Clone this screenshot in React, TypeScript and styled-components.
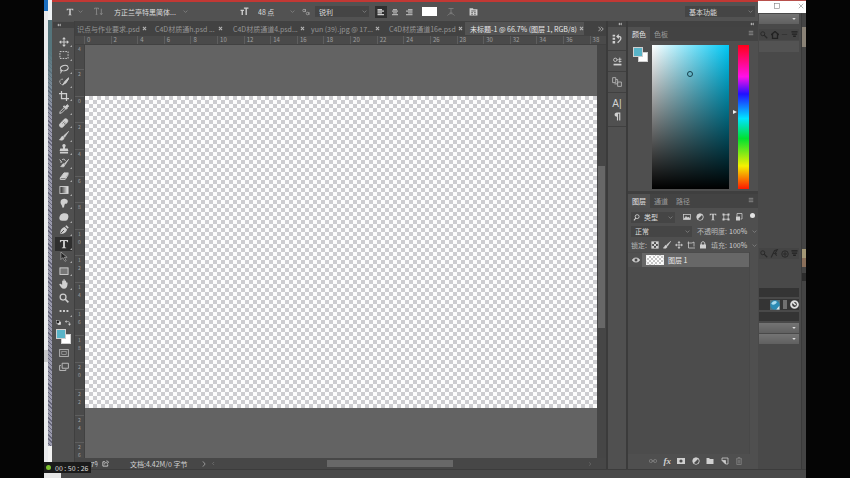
import React from "react";
import styled, { createGlobalStyle, css } from "styled-components";

const GlobalStyle = createGlobalStyle`
  * { box-sizing: border-box; }
  body { margin: 0; background: #050505; }
  body, button, input, select {
    font-family: "Noto Sans CJK SC", "Noto Sans", sans-serif;
    font-size: 7px;
    line-height: 10px;
    color: #d2d2d2;
  }
  button, input, select { margin: 0; padding: 0; border: 0; background: none; outline: none; }
`;

const checker = (size: number, tone: string) => css`
  background: repeating-conic-gradient(${tone} 0 25%, #fdfdfd 0 50%) 0 0 / ${size}px ${size}px;
`;

/* ---------- icons ---------- */
const shapes: Record<string, React.ReactNode> = {
  move: <><path d="M8 2v12M2 8h12" /><path d="M8 0l3 3.5H5zM8 16l3-3.5H5zM0 8l3.5-3v6zM16 8l-3.5-3v6z" fill="currentColor" stroke="none" /></>,
  marquee: <path d="M1.5 2.5h13v11h-13z" strokeDasharray="2.6 1.7" />,
  lasso: <><ellipse cx="8.5" cy="6.5" rx="6.3" ry="4.3" transform="rotate(-12 8.5 6.5)" /><path d="M3.5 9.5c-2 1-1 3 .5 2.5s1.500-2-.5-2.500M3.500 12l-1 3" /></>,
  quick: <><path d="M6 3.500C2 3 0 7 2 10s5 3 6 2" strokeDasharray="2 1.200" /><path d="M15.500 1L9 7.500l-2.500 4.500 4.500-2.500L16 2z" fill="currentColor" stroke="currentColor" /></>,
  crop: <path d="M4 0v12h12M0 4h12v12" strokeWidth="2" />,
  dropper: <><path d="M9 3l4 4-1.500 1.500-5-4.500zM10.500 4l2.500-3 2.500 2-2.500 3z" fill="currentColor" /><path d="M8 6l-6 6-.8 3 3-.8 6-6" /></>,
  heal: <><path d="M1.500 9.500l7-7.500c3-2 7 1 5 4.500l-7 7.500c-3 2.500-7.500-1-5-4.500z" fill="currentColor" /><path d="M6 6l4.500 4.500M5 9h1M8 11h1M8 6h1M10 8h1" stroke="#505050" strokeWidth="1" /></>,
  brush: <path d="M15.500.5L7 8l2 2zM6 8.500c-3 0-2 4-5.500 5.500 4 1.500 8 .5 7.500-3.500z" fill="currentColor" stroke="currentColor" strokeWidth="1" />,
  stamp: <path d="M5.500 1.500c1-2 4-2 5 0 .7 2-1 3-1 5.500H14l1 4H1l1-4h4.500c0-2.500-1.700-3.500-1-5.500zM1.500 12.500h13V15h-13z" fill="currentColor" stroke="none" />,
  history: <><path d="M15.500 2L8.500 9l1.500 1.500zM7.500 9c-3 0-2 3-5 4.500 4 1.500 7 .5 6.500-2.500z" fill="currentColor" stroke="currentColor" strokeWidth="1" /><path d="M1 2.500l3 3.500M2 6.500h3M5 2.500c3-1.500 5 0 5 2" /></>,
  eraser: <><path d="M8 3h7l-5 8H2z" fill="currentColor" /><path d="M2 11v2.500h8l5-8" /></>,
  gradient: <rect x="1.500" y="2.500" width="13" height="11" fill="url(#toolGradient)" />,
  smudge: <path d="M5 15c1-3-3-5-2.500-9C3 2 6 1 10 1.500c5 .5 5 6 2 7.500L9.500 9c-1 2-1.500 4-1.500 6z" fill="currentColor" stroke="none" />,
  sponge: <path d="M2 5c2-3 9-4 12-1.500 2 3 1 7-1 9.500-3 1.500-8 1.500-11 0-2-2-2-5 0-8z" fill="currentColor" stroke="none" />,
  pen: <><path d="M2 14c0-5 1-9 7-11l4 4c-2 6-6 7-11 7zM10 2l2-1.500 3.500 3.500L14 6" fill="currentColor" stroke="none" /><path d="M3 13l5-5" stroke="#505050" /></>,
  type: <path d="M1.500 1.500h13V5h-1.200c-.3-1.600-1-2-3.800-2v9.500c0 1 .6 1.200 2 1.400v.8h-7v-.8c1.400-.2 2-.4 2-1.400V3c-2.800 0-3.500.4-3.800 2H1.500z" fill="currentColor" stroke="none" />,
  path: <path d="M3 0v12l3-3 3.500 6 2-1-3-5.500H13z" fill="#242424" stroke="#bdbdbd" strokeWidth="1" />,
  rect: <rect x="1.500" y="3" width="13" height="10.500" fill="#777" />,
  hand: <path d="M5 9V3.500c0-1.500 1.800-1.500 2 0V1.500c0-1.800 2-1.800 2.200 0v2c.3-1.500 2-1.500 2.200.2V6c.4-1.500 2.300-1.200 2.300.2-.2 4-.7 9-5.500 9.300C4 15.500 3 12 .6 9 0 7.500 2 7 3 8z" fill="currentColor" stroke="none" />,
  zoom: <><circle cx="6.500" cy="6.500" r="4.700" strokeWidth="2" /><path d="M10 10l5 5" strokeWidth="2.600" /></>,
  more: <path d="M1 8h3M6.500 8h3M12 8h3" strokeWidth="3" />,
  mask: <><rect x="1" y="2.500" width="14" height="11" /><rect x="4.500" y="5.500" width="7" height="5" strokeWidth="1" /></>,
  screens: <><path d="M5 2h10v8H5z" /><path d="M3 5.500H1v8h10v-2" /></>,
  swap: <><path d="M3 4h5c3 0 4 1 4 7" /><path d="M4 0v8L0 4zM8 10h8l-4 5z" fill="currentColor" stroke="none" /></>,
  defaults: <><rect x="6" y="6" width="9" height="9" fill="#eee" /><rect x="1" y="1" width="9" height="9" fill="#111" /></>,
  orient: <path d="M1 4V2h7v2M4.500 2v11M3 13h3M13 3v10M11 11l2 3 2-3" />,
  sizes: <path d="M1 6h6M4 6v8M7 2h8M11 2v12" strokeWidth="2.400" />,
  aa: <><circle cx="4" cy="5" r="2.500" /><path d="M7 2v6" /><circle cx="11" cy="11" r="2.500" /><path d="M14 8v6" /></>,
  warp: <path d="M3 1h10M8 1v9M5 10h6M1 15c4-5 10-5 14 0" />,
  charpanel: <><path d="M1 2h6l1 2h7v11H1z" fill="currentColor" stroke="none" /><path d="M4 7h8M4 10h3M9 10h3M4 13h3M9 13h3" stroke="#555" /></>,
  left: <path d="M1 3h9M1 6.300h13M1 9.600h9M1 13h13" strokeWidth="2.500" />,
  center: <path d="M4 3h8M2 6.300h12M4 9.600h8M2 13h12" strokeWidth="2.500" />,
  right: <path d="M6 3h9M2 6.300h13M6 9.600h9M2 13h13" strokeWidth="2.500" />,
  menu: <path d="M2 3.500h12M2 8h12M2 12.500h12" strokeWidth="2" />,
  historyPanel: <><path d="M1 1h4v3H1zM1 6h4v3H1zM1 11h4v4H1z" fill="currentColor" stroke="none" /><path d="M8 4h4c3 0 3 4 0 7l-3 3M11 1L8 4l3 3" strokeWidth="2" /></>,
  props: <><path d="M1 13.500h14" strokeWidth="3" /><circle cx="4" cy="5" r="3" /><path d="M7 5h3M12 1v9M10 4h5M10 8h5" /></>,
  layersComp: <path d="M1 1h5v8H1zM6 4h3v7H4M9 8h6v7H9z" />,
  para: <path d="M13 1H7C1.500 1 1.500 8.500 7 8.500V15h2V3h2v12h2z" fill="currentColor" stroke="none" />,
  image: <><rect x="1" y="3" width="14" height="10" /><path d="M2 12l4-5 3 3 2-2 3 4z" fill="currentColor" /></>,
  adjust: <><circle cx="8" cy="8" r="6.500" fill="currentColor" /><path d="M4 12L12 4a6 6 0 010 8 6 6 0 01-8 0z" fill="#4d4d4d" stroke="none" /></>,
  shape: <><path d="M3.500 3.500h9v9h-9z" /><path d="M1 1h4v4H1zM11 1h4v4h-4zM1 11h4v4H1zM11 11h4v4h-4z" fill="currentColor" stroke="none" /></>,
  smart: <><path d="M4 7V1h10v11h-3" /><rect x="2" y="7" width="8" height="8" fill="currentColor" stroke="none" /></>,
  grid: <><rect x="1.500" y="1.500" width="13" height="13" /><path d="M2 2h4v4H2zM10 2h4v4h-4zM6 6h4v4H6zM2 10h4v4H2zM10 10h4v4h-4z" fill="currentColor" stroke="none" /></>,
  artboard: <path d="M3 1v13h13M1 4h9l4-2v9" />,
  lock: <><rect x="2" y="7" width="12" height="8" fill="currentColor" stroke="none" /><path d="M4.500 8V4.500c0-4 7-4 7 0V8" strokeWidth="2" /></>,
  eye: <><path d="M0.500 8C4 2.500 12 2.500 15.500 8 12 13.500 4 13.500.5 8z" fill="currentColor" /><circle cx="8" cy="8" r="3" fill="#4a4a4a" stroke="none" /></>,
  search: <><circle cx="9.500" cy="6" r="4.500" strokeWidth="2" /><path d="M6.500 9.500L2 14.500" strokeWidth="2.400" /></>,
  magnify: <><circle cx="5.500" cy="5.500" r="4" strokeWidth="2" /><path d="M8.500 8.500l6 6" strokeWidth="2.400" /></>,
  link: <><rect x="0.500" y="5" width="6.500" height="6" rx="3" /><rect x="9" y="5" width="6.500" height="6" rx="3" /><path d="M5 8h6" /></>,
  maskAdd: <><path d="M0 2h16v12H0z" fill="currentColor" stroke="none" /><circle cx="8" cy="8" r="3.200" fill="#4b4b4b" stroke="none" /></>,
  folder: <path d="M1 2h5l2 2h7v10H1z" fill="currentColor" stroke="none" />,
  newLayer: <><path d="M2 7V2h12v12H9" /><path d="M2 7h7v7z" fill="currentColor" /></>,
  trash: <path d="M2 3.500h12M6 3V1h4v2M3.500 4v11h9V4M6.500 6v7M9.500 6v7" />,
  home: <path d="M8 1L1 7h2v8h10V7h2z" strokeWidth="2.600" />,
  minus: <path d="M2 8h12" strokeWidth="2" />,
  funnel: <><path d="M1 2h14" strokeWidth="3" /><path d="M2 7h12M5 12h6" strokeWidth="3" /></>,
  bone: <path d="M2 15L8 3l5-2-4 7 3 4M5 8h7" strokeWidth="2" />,
  globe: <><circle cx="8" cy="8" r="6.500" strokeWidth="2" /><path d="M4 8h8M8 3v10" strokeWidth="2" /></>,
  export: <><path d="M7 4H2v10h11v-4" strokeWidth="2" /><path d="M6 10c0-4 3-5 6-5M11 1l4 4-4 4" strokeWidth="2" /></>,
  close: <path d="M2 2l12 12M14 2L2 14" />,
  closeBold: <path d="M3 3l10 10M13 3L3 13" strokeWidth="3.500" />,
  square: <rect x="1.500" y="1.500" width="13" height="13" />,
  chevron: <path d="M2 5l6 6 6-6" strokeWidth="2.200" />,
  triangle: <path d="M1 4h14l-7 8z" fill="currentColor" stroke="none" />,
  prev: <path d="M10 3L5 8l5 5" strokeWidth="2" />,
  next: <path d="M5 1l6 7-6 7" strokeWidth="2" />,
  dblLeft: <path d="M8 2v12L1 8zM15 2v12L8 8z" fill="currentColor" stroke="none" />,
  dblRight: <path d="M1 2l6 6-6 6M8 2l6 6-6 6" strokeWidth="2.400" />,
  ball: <><path d="M0 0h16v16H0z" fill="#54717c" stroke="none" /><circle cx="8" cy="8" r="7.500" fill="#2b8bb4" stroke="none" /><path d="M2 6c3-5 7-5 9-3-2 4-6 6-9 3z" fill="#a9dcef" stroke="none" /><path d="M10 15l5-6v6z" fill="#dfe9ec" stroke="none" /></>,
  noEntry: <><circle cx="8" cy="8" r="6" strokeWidth="3.500" /><path d="M4 3l6 6" strokeWidth="3" /></>,
};

const Svg = styled.svg<{ $s: number; $tone?: string }>`
  display: block;
  flex: none;
  width: ${(p) => p.$s}px;
  height: ${(p) => p.$s}px;
  color: ${(p) => p.$tone ?? "#d0d0d0"};
`;

const Icon = ({ name, size = 9, tone }: { name: string; size?: number; tone?: string }) => (
  <Svg $s={size} $tone={tone} viewBox="0 0 16 16" fill="none" stroke="currentColor" strokeWidth="1.5" aria-hidden="true">
    {name === "gradient" && (
      <defs>
        <linearGradient id="toolGradient"><stop offset="0" stopColor="#222" /><stop offset="1" stopColor="#eee" /></linearGradient>
      </defs>
    )}
    {shapes[name]}
  </Svg>
);

/* ---------- shared parts ---------- */
const IconButton = styled.button<{ $w?: number; $active?: boolean }>`
  display: flex;
  flex: none;
  align-items: center;
  justify-content: center;
  width: ${(p) => p.$w ?? 14}px;
  height: 12px;
  background: ${(p) => (p.$active ? "#303030" : "transparent")};
`;

const SelectFrame = styled.label<{ $w?: number; $flat?: boolean }>`
  display: flex;
  flex: ${(p) => (p.$w ? "none" : "1")};
  align-items: center;
  width: ${(p) => (p.$w ? p.$w + "px" : "auto")};
  min-width: 0;
  height: 11px;
  padding: 0 2px 0 4px;
  background: ${(p) => (p.$flat ? "transparent" : "#454545")};
  select {
    flex: 1;
    min-width: 0;
    appearance: none;
    color: #dcdcdc;
    text-overflow: ellipsis;
  }
`;

const Select = ({ label, value, w, flat }: { label: string; value: string; w?: number; flat?: boolean }) => (
  <SelectFrame $w={w} $flat={flat}>
    <select aria-label={label} defaultValue={value}><option>{value}</option></select>
    <Icon name="chevron" size={5} tone="#8e8e8e" />
  </SelectFrame>
);

/* ---------- frame ---------- */
const Page = styled.div`
  display: flex;
  min-height: 100vh;
  overflow: hidden;
`;
const Side = styled.div`
  flex: 0 0 44px;
  background: #050505;
`;
const Desktop = styled.div`
  position: relative;
  display: flex;
  flex: 1;
  flex-direction: column;
  min-width: 0;
  background: #484848;
`;
const Windows = styled.div`
  display: flex;
  flex: 1;
`;
const Edge = styled.div`
  display: flex;
  flex: 0 0 8px;
  background: #e9eaec;
`;
const EdgePlain = styled.div`
  flex: 1;
  background: linear-gradient(#1c6fc0 0 11px, #e9eaec 11px 350px, #c5c6c8 350px 362px, #e9eaec 362px);
`;
const EdgeHatch = styled.div`
  flex: 1;
  background:
    linear-gradient(#eef2f4 0 20px, #55757c 20px 50px, rgba(85, 117, 124, 0) 120px 446px, #f2f2f2 446px),
    repeating-linear-gradient(45deg, #66667a 0 1px, #9a9aac 1px 3px);
`;
const Editor = styled.main`
  display: flex;
  flex: 1;
  flex-direction: column;
  min-width: 0;
  border-top: 2px solid #c23834;
  background: #424242;
`;
const Footer = styled.footer`
  flex: 0 0 9px;
  border-top: 1px solid #3c3c3c;
  background: linear-gradient(90deg, #e6e6e6 17px, #494949 17px);
`;

/* ---------- options bar ---------- */
const OptionsBar = styled.header`
  display: flex;
  flex: 0 0 19px;
  align-items: center;
  padding: 0 3px 0 10px;
  background: #525252;
`;
const Group = styled.div<{ $ml?: number; $gap?: number }>`
  display: flex;
  align-items: center;
  gap: ${(p) => p.$gap ?? 2}px;
  margin-left: ${(p) => p.$ml ?? 0}px;
`;
const TextColor = styled.button`
  width: 15px;
  height: 9px;
  margin-left: 7px;
  background: #fff;
`;
const Spring = styled.div`flex: 1;`;

const Options = () => (
  <OptionsBar>
    <IconButton $w={16} aria-label="文字工具"><Icon name="type" size={8} /></IconButton>
    <Icon name="chevron" size={5} tone="#8e8e8e" />
    <Group $ml={8}><IconButton aria-label="切换文本取向"><Icon name="orient" size={9} tone="#8c8c8c" /></IconButton></Group>
    <Group $ml={5}><Select label="字体" value="方正兰亭特黑简体..." w={80} flat /></Group>
    <Group $ml={50} $gap={5}><Icon name="sizes" size={9} /><Select label="字号" value="48 点" w={43} flat /></Group>
    <Group $ml={5} $gap={5}><Icon name="aa" size={8} tone="#aaa" /><Select label="消除锯齿" value="锐利" w={54} /></Group>
    <Group $ml={6}>
      <IconButton $w={12} $active aria-label="左对齐"><Icon name="left" size={8} /></IconButton>
      <IconButton $w={12} aria-label="居中"><Icon name="center" size={8} tone="#b0b0b0" /></IconButton>
      <IconButton $w={12} aria-label="右对齐"><Icon name="right" size={8} tone="#b0b0b0" /></IconButton>
    </Group>
    <TextColor aria-label="文本颜色" />
    <Group $ml={7}><IconButton aria-label="变形文字"><Icon name="warp" size={8} tone="#858585" /></IconButton></Group>
    <Group $ml={8}><IconButton aria-label="字符面板"><Icon name="charpanel" size={9} /></IconButton></Group>
    <Spring />
    <Select label="工作区" value="基本功能" w={70} />
  </OptionsBar>
);

/* ---------- tools ---------- */
const Body = styled.div`
  display: flex;
  flex: 1;
  min-height: 0;
`;
const ToolColumn = styled.nav`
  display: flex;
  flex: 0 0 23px;
  flex-direction: column;
  align-items: center;
  padding: 1px 0 0 1px;
  border-right: 1px solid #3f3f3f;
  background: #505050;
`;
const Grip = styled.div<{ $end?: boolean }>`
  display: flex;
  flex: 0 0 6px;
  align-items: center;
  align-self: stretch;
  justify-content: ${(p) => (p.$end ? "flex-end" : "flex-start")};
  padding: 0 4px;
  background: #424242;
`;
const ToolList = styled.div`
  display: flex;
  flex: 0 0 283px;
  flex-direction: column;
  margin-top: 7px;
`;
const Tool = styled.button<{ $active?: boolean; $more?: boolean }>`
  position: relative;
  display: flex;
  flex: 1;
  align-items: center;
  justify-content: center;
  width: 17px;
  background: ${(p) => (p.$active ? "#2f2f2f" : "transparent")};
  &::after {
    content: "";
    position: absolute;
    right: 0;
    bottom: 1px;
    border: 1px solid transparent;
    border-right-color: ${(p) => (p.$more ? "#a8a8a8" : "transparent")};
    border-bottom-color: ${(p) => (p.$more ? "#a8a8a8" : "transparent")};
  }
`;
const MiniRow = styled.div`
  display: flex;
  gap: 4px;
  margin: 2px 0 3px;
`;
const Swatches = styled.div<{ $s: number }>`
  display: grid;
  flex: none;
  grid-template: repeat(3, ${(p) => p.$s}px) / repeat(3, ${(p) => p.$s}px);
  button { border: 1px solid #cfcfcf; }
  button:first-child { grid-area: 1 / 1 / 3 / 3; z-index: 1; background: #59b4c8; }
  button:last-child { grid-area: 2 / 2 / 4 / 4; background: #fff; }
`;
const ModeButtons = styled.div`
  display: flex;
  flex-direction: column;
  gap: 2px;
  margin-top: 3px;
`;

const tools: [string, string][] = [
  ["move", "移动"], ["marquee", "选框"], ["lasso", "套索"], ["quick", "快速选择"], ["crop", "裁剪"], ["dropper", "吸管"],
  ["heal", "修复画笔"], ["brush", "画笔"], ["stamp", "仿制图章"], ["history", "历史记录画笔"], ["eraser", "橡皮擦"],
  ["gradient", "渐变"], ["smudge", "涂抹"], ["sponge", "海绵"], ["pen", "钢笔"], ["type", "文字"], ["path", "路径选择"],
  ["rect", "矩形"], ["hand", "抓手"], ["zoom", "缩放"], ["more", "编辑工具栏"],
];

const Tools = () => (
  <ToolColumn>
    <Grip><Icon name="dblLeft" size={4} tone="#b5b5b5" /></Grip>
    <ToolList>
      {tools.map(([icon, label]) => (
        <Tool key={icon} aria-label={label} $active={icon === "type"} $more={icon !== "zoom"}><Icon name={icon} size={10} /></Tool>
      ))}
    </ToolList>
    <MiniRow><Icon name="defaults" size={5} /><Icon name="swap" size={6} /></MiniRow>
    <Swatches $s={5}><button aria-label="前景色" /><button aria-label="背景色" /></Swatches>
    <ModeButtons>
      <IconButton aria-label="快速蒙版"><Icon name="mask" size={10} tone="#b4b4b4" /></IconButton>
      <IconButton aria-label="屏幕模式"><Icon name="screens" size={10} tone="#c0c0c0" /></IconButton>
    </ModeButtons>
  </ToolColumn>
);

/* ---------- document ---------- */
const Document = styled.section`
  display: flex;
  flex: 1;
  flex-direction: column;
  min-width: 0;
`;
const TabRow = styled.div`
  display: flex;
  flex: 0 0 15px;
  align-items: center;
  padding-right: 2px;
`;
const DocTab = styled.div<{ $active?: boolean }>`
  display: flex;
  flex: 0 0 ${(p) => (p.$active ? 119 : 78)}px;
  align-items: center;
  justify-content: space-between;
  gap: 2px;
  height: 13px;
  padding: 0 ${(p) => (p.$active ? 5 : 8)}px 0 ${(p) => (p.$active ? 5 : 2)}px;
  overflow: hidden;
  background: ${(p) => (p.$active ? "#535353" : "transparent")};
  button { flex: none; color: ${(p) => (p.$active ? "#e8e8e8" : "#969696")}; white-space: nowrap; }
`;
const TopRuler = styled.div`
  display: flex;
  flex: 0 0 9px;
  padding-left: 9px;
  overflow: hidden;
  border-bottom: 1px solid #414141;
  background: #4a4a4a;
  font-size: 6px;
  line-height: 8px;
  color: #a0a0a0;
`;
const TopMark = styled.span`
  flex: 0 0 5.1%;
  padding-left: 2px;
  border-left: 1px solid #5e5e5e;
`;
const Work = styled.div`
  display: flex;
  flex: 1;
`;
const SideRuler = styled.div`
  display: flex;
  flex: 0 0 10px;
  flex-direction: column;
  height: 413px;
  overflow: hidden;
  border-right: 1px solid #414141;
  background: #4a4a4a;
  font-size: 5px;
  line-height: 8px;
  color: #a2a2a2;
  text-align: center;
`;
const SideMark = styled.span`
  flex: 0 0 6.45%;
  border-top: 1px solid #5e5e5e;
  &:first-child { flex-basis: 24px; border-top: 0; }
  i { display: block; font-style: normal; }
`;
const Pasteboard = styled.div`
  display: flex;
  flex: 1;
  flex-direction: column;
  padding-top: 51px;
  background: #636363;
`;
const Artboard = styled.div`
  flex: 0 0 312px;
  ${checker(8, "#cdcdd0")}
`;
const ScrollTrack = styled.div`
  display: flex;
  flex: 0 0 9px;
  flex-direction: column;
  padding: 121px 1px 0;
  background: #464646;
`;
const ScrollThumb = styled.div`
  flex: 0 0 162px;
  background: #676767;
`;
const Status = styled.div`
  display: flex;
  flex: 0 0 11px;
  align-items: center;
  padding: 0 2px;
  background: #474747;
`;
const ZoomField = styled.input`
  width: 21px;
  text-align: right;
`;
const DocInfo = styled.span`
  width: 71px;
  margin-left: 21px;
  white-space: nowrap;
`;
const HTrack = styled.div`
  display: flex;
  flex: 1;
  justify-content: center;
  padding-right: 24px;
`;
const HThumb = styled.div`
  width: 36%;
  height: 7px;
  background: #686868;
`;

const docs = ["识点与作业要求.psd", "C4D材质通h.psd ...", "C4D材质通道4.psd...", "yun (39).jpg @ 17...", "C4D材质通道16e.psd", "未标题-1 @ 66.7% (图层 1, RGB/8)"];
const topMarks = Array.from({ length: 20 }, (_, i) => String(i * 2));
const sideMarks = [4, 2, 0, 2, 4, 6, 8, 10, 12, 14, 16, 18, 20, 22, 24, 26].map(String);

const DocumentArea = () => (
  <Document>
    <TabRow>
      {docs.map((d, i) => (
        <DocTab key={d} $active={i === 5}>
          <button>{d}</button>
          <button aria-label="关闭"><Icon name="closeBold" size={5} tone="#b5b5b5" /></button>
        </DocTab>
      ))}
      <Spring />
      <Icon name="dblRight" size={6} tone="#b5b5b5" />
    </TabRow>
    <TopRuler>{topMarks.map((m) => <TopMark key={m}>{m}</TopMark>)}</TopRuler>
    <Work>
      <SideRuler>
        {sideMarks.map((m, i) => <SideMark key={i}>{m.split("").map((c, k) => <i key={k}>{c}</i>)}</SideMark>)}
      </SideRuler>
      <Pasteboard><Artboard /></Pasteboard>
      <ScrollTrack><ScrollThumb /></ScrollTrack>
    </Work>
    <Status>
      <ZoomField aria-label="缩放比例" defaultValue="66.67%" />
      <Group $ml={4}><Icon name="export" size={7} /></Group>
      <DocInfo>文档:4.42M/0 字节</DocInfo>
      <Icon name="next" size={6} tone="#b0b0b0" />
      <Group $ml={4}><Icon name="prev" size={5} tone="#7c7c7c" /></Group>
      <HTrack><HThumb /></HTrack>
      <Icon name="next" size={4} tone="#7c7c7c" />
      <Group $ml={12} />
    </Status>
  </Document>
);

/* ---------- icon dock ---------- */
const Dock = styled.aside`
  display: flex;
  flex: 0 0 22px;
  flex-direction: column;
  border: solid #3b3b3b;
  border-width: 0 2px;
  background: #505050;
`;
const DockSlot = styled.div<{ $h: number }>`
  display: flex;
  flex: 0 0 ${(p) => p.$h}px;
  flex-direction: column;
  align-items: center;
  justify-content: center;
  gap: 2px;
  border-bottom: 1px solid #404040;
`;
const Glyph = styled.span`
  font-family: "Liberation Sans", sans-serif;
  font-size: 10px;
  line-height: 12px;
`;

/* ---------- panels ---------- */
const Panels = styled.aside`
  display: flex;
  flex: 0 0 130px;
  flex-direction: column;
  background: #4f4f4f;
`;
const PanelTabs = styled.div`
  display: flex;
  flex: 0 0 14px;
  align-items: stretch;
  padding-right: 2px;
  background: #434343;
`;
const PanelTab = styled.button<{ $active?: boolean }>`
  padding: 0 4px;
  background: ${(p) => (p.$active ? "#505050" : "transparent")};
  color: ${(p) => (p.$active ? "#e6e6e6" : "#9b9b9b")};
`;
const ColorBody = styled.div`
  display: flex;
  flex: 0 0 153px;
  align-items: flex-start;
  padding: 4px 9px 0 5px;
  border-bottom: 3px solid #3f3f3f;
`;
const SwatchHolder = styled.div`
  flex: 0 0 19px;
  padding-top: 2px;
`;
const Field = styled.div`
  position: relative;
  flex: 1;
  height: 144px;
  background: linear-gradient(transparent, #000), linear-gradient(90deg, #fff, #00c8f5);
  &::after {
    content: "";
    position: absolute;
    top: 18%;
    left: 46%;
    width: 4px;
    height: 4px;
    border: 1px solid #16404c;
    border-radius: 50%;
  }
`;
const HueArrow = styled.div`
  flex: 0 0 9px;
  padding: 65px 0 0 4px;
  &::after {
    content: "";
    display: block;
    width: 0;
    border: solid transparent;
    border-width: 2px 0 2px 4px;
    border-left-color: #eee;
  }
`;
const HueBar = styled.div`
  flex: 0 0 11px;
  height: 144px;
  background: linear-gradient(#ff0018, #ff10e8 22%, #2010ff 34%, #00e4ff 51%, #00e030 65%, #f4f000 84%, #ff1800);
`;
const Rows = styled.div`
  padding-top: 2px;
`;
const PanelRow = styled.div`
  display: flex;
  height: 14px;
  align-items: center;
  padding: 0 1px 0 3px;
  span { color: #b8b8b8; white-space: nowrap; }
`;
const Percent = styled.input`
  width: 22px;
  margin-left: 1px;
`;
const Dot = styled.button`
  width: 5px;
  height: 5px;
  margin: 0 2px 4px auto;
  border-radius: 50%;
  background: #e4e4e4;
`;
const IconRow = styled.div<{ $gap: number; $ml?: number; $end?: boolean }>`
  display: flex;
  align-items: center;
  gap: ${(p) => p.$gap}px;
  margin-left: ${(p) => (p.$end ? "auto" : (p.$ml ?? 0) + "px")};
`;
const FilterBox = styled.div`
  display: flex;
  align-items: center;
  padding-left: 2px;
  background: #454545;
`;
const LayerArea = styled.div`
  flex: 1;
  margin-right: 8px;
  padding-top: 1px;
  border-right: 1px solid #484848;
  background: #4c4c4c;
`;
const Layer = styled.div`
  display: flex;
  align-items: center;
  height: 14px;
  padding-left: 4px;
  background: linear-gradient(90deg, #505050 14px, #676767 14px);
  span { margin-left: 4px; color: #ececec; }
`;
const Thumb = styled.div`
  width: 18px;
  height: 10px;
  margin-left: 6px;
  border: 1px dashed #eee;
  ${checker(4, "#c6c6c6")}
`;
const LayerFooter = styled.div`
  display: flex;
  flex: 0 0 15px;
  align-items: center;
  justify-content: space-between;
  padding: 0 15px 1px 21px;
`;
const Fx = styled.i`
  font-family: "Liberation Serif", serif;
  font-size: 9px;
  font-weight: bold;
`;

const PanelColumn = () => (
  <Panels>
    <Grip $end><Icon name="dblLeft" size={4} tone="#b5b5b5" /></Grip>
    <PanelTabs>
      <PanelTab $active>颜色</PanelTab><PanelTab>色板</PanelTab><Spring />
      <IconButton $w={10} aria-label="颜色面板菜单"><Icon name="menu" size={6} tone="#999" /></IconButton>
    </PanelTabs>
    <ColorBody>
      <SwatchHolder><Swatches $s={5}><button aria-label="前景色" /><button aria-label="背景色" /></Swatches></SwatchHolder>
      <Field /><HueArrow /><HueBar />
    </ColorBody>
    <PanelTabs>
      <PanelTab $active>图层</PanelTab><PanelTab>通道</PanelTab><PanelTab>路径</PanelTab><Spring />
      <IconButton $w={10} aria-label="图层面板菜单"><Icon name="menu" size={6} tone="#999" /></IconButton>
    </PanelTabs>
    <Rows>
      <PanelRow>
        <FilterBox><Icon name="search" size={7} /><Select label="图层过滤" value="类型" w={35} flat /></FilterBox>
        <IconRow $gap={5} $ml={8}>
          {["image", "adjust", "type", "shape", "smart"].map((n) => <Icon key={n} name={n} size={8} />)}
        </IconRow>
        <Dot aria-label="过滤开关" />
      </PanelRow>
      <PanelRow>
        <Select label="混合模式" value="正常" w={61} />
        <IconRow $gap={1} $end>
          <span>不透明度:</span><Percent aria-label="不透明度" defaultValue="100%" /><Icon name="chevron" size={5} tone="#8e8e8e" />
        </IconRow>
      </PanelRow>
      <PanelRow>
        <span>锁定:</span>
        <IconRow $gap={4} $ml={4}>
          {["grid", "brush", "move", "artboard", "lock"].map((n) => <Icon key={n} name={n} size={8} />)}
        </IconRow>
        <IconRow $gap={1} $end>
          <span>填充:</span><Percent aria-label="填充" defaultValue="100%" /><Icon name="chevron" size={5} tone="#8e8e8e" />
        </IconRow>
      </PanelRow>
    </Rows>
    <LayerArea>
      <Layer><Icon name="eye" size={8} /><Thumb /><span>图层 1</span></Layer>
    </LayerArea>
    <LayerFooter>
      <Icon name="link" size={8} tone="#858585" />
      <Fx>fx</Fx>
      {["maskAdd", "adjust", "folder", "newLayer"].map((n) => <Icon key={n} name={n} size={8} />)}
      <Icon name="trash" size={8} tone="#858585" />
    </LayerFooter>
  </Panels>
);

/* ---------- window behind ---------- */
const Behind = styled.aside`
  display: flex;
  flex: 0 0 48px;
  flex-direction: column;
  background: #494949;
`;
const Caption = styled.div`
  display: flex;
  flex: 0 0 13px;
  align-items: center;
  justify-content: flex-end;
  gap: 18px;
  padding: 0 2px 2px;
  border-top: 1px solid #b8504c;
  background: #fff;
`;
const BehindBody = styled.div`
  display: flex;
  flex: 1;
`;
const BehindMain = styled.div`
  display: flex;
  flex: 1;
  flex-direction: column;
  padding: 1px 2px 0 1px;
`;
const BehindEdge = styled.div`
  flex: 0 0 5px;
  border-left: 1px solid #3a3a3a;
  background: linear-gradient(#444 0 14px, #8a8276 14px 34px, #444 34px 236px, #a39775 236px 245px, #8a6f5a 245px 254px, #444 254px 260px, #2c2c2c 260px 268px, #444 268px);
`;
const GreyDrop = styled.button`
  display: flex;
  flex: 0 0 10px;
  align-items: center;
  justify-content: flex-end;
  padding-right: 3px;
  background: linear-gradient(#747474, #606060);
`;
const DarkTools = styled.div<{ $mt: number }>`
  display: flex;
  flex: 0 0 11px;
  align-items: center;
  justify-content: space-between;
  margin-top: ${(p) => p.$mt}px;
  padding: 0 1px;
  background: #444;
`;
const Pale = styled.div`
  flex: 0 0 11px;
  margin-top: 1px;
  background: #535353;
`;
const DarkField = styled.div<{ $mt: number; $h: number }>`
  display: flex;
  flex: 0 0 ${(p) => p.$h}px;
  align-items: center;
  justify-content: flex-end;
  gap: 3px;
  margin: ${(p) => p.$mt}px 0 2px;
  background: #343434;
`;
const Knob = styled.button`
  width: 4px;
  height: 9px;
  background: #707070;
`;
const Stack = styled.div`
  display: flex;
  flex-direction: column;
  gap: 1px;
`;

const BehindWindow = () => (
  <Behind>
    <Caption><Icon name="square" size={6} tone="#777" /><Icon name="close" size={6} tone="#777" /></Caption>
    <BehindBody>
      <BehindMain>
        <GreyDrop aria-label="布局"><Icon name="triangle" size={4} tone="#ddd" /></GreyDrop>
        <DarkTools $mt={5}>
          <Icon name="magnify" size={8} tone="#2a2a2a" /><Icon name="home" size={8} tone="#222" />
          <Icon name="minus" size={7} tone="#343434" /><Icon name="funnel" size={7} tone="#222" />
        </DarkTools>
        <Pale />
        <DarkTools $mt={196}>
          <Icon name="magnify" size={8} tone="#2a2a2a" /><Icon name="bone" size={9} tone="#2a2a2a" />
          <Icon name="globe" size={8} tone="#2a2a2a" /><Icon name="funnel" size={7} tone="#222" />
        </DarkTools>
        <DarkField $mt={29} $h={9} />
        <DarkField $mt={0} $h={11}><Icon name="ball" size={10} /><Knob aria-label="展开" /><Icon name="noEntry" size={9} tone="#ddd" /></DarkField>
        <DarkField $mt={0} $h={9} />
        <Stack>
          <GreyDrop aria-label="选项一"><Icon name="triangle" size={4} tone="#ddd" /></GreyDrop>
          <GreyDrop aria-label="选项二"><Icon name="triangle" size={4} tone="#ddd" /></GreyDrop>
        </Stack>
      </BehindMain>
      <BehindEdge />
    </BehindBody>
  </Behind>
);

/* ---------- recording timer over the corner ---------- */
const Timer = styled.div`
  position: absolute;
  bottom: 5px;
  left: 0;
  display: flex;
  align-items: center;
  gap: 4px;
  height: 11px;
  padding: 0 3px 0 2px;
  background: #1b1b1b;
  color: #dedede;
  white-space: pre;
  &::before {
    content: "";
    width: 5px;
    height: 5px;
    border-radius: 50%;
    background: #7cc02e;
  }
`;

export default function App() {
  return (
    <Page>
      <GlobalStyle />
      <Side />
      <Desktop>
        <Windows>
          <Edge><EdgePlain /><EdgeHatch /></Edge>
          <Editor>
            <Options />
            <Body>
              <Tools />
              <DocumentArea />
              <Dock>
                <Grip $end><Icon name="dblLeft" size={4} tone="#b5b5b5" /></Grip>
                <DockSlot $h={24}><Icon name="historyPanel" size={10} /></DockSlot>
                <DockSlot $h={21}><Icon name="props" size={9} /></DockSlot>
                <DockSlot $h={21}><Icon name="layersComp" size={10} tone="#b0b0b0" /></DockSlot>
                <DockSlot $h={34}><Glyph>A|</Glyph><Icon name="para" size={9} /></DockSlot>
              </Dock>
              <PanelColumn />
            </Body>
          </Editor>
          <BehindWindow />
        </Windows>
        <Footer />
        <Timer>00 : 50 : 26</Timer>
      </Desktop>
      <Side />
    </Page>
  );
}
